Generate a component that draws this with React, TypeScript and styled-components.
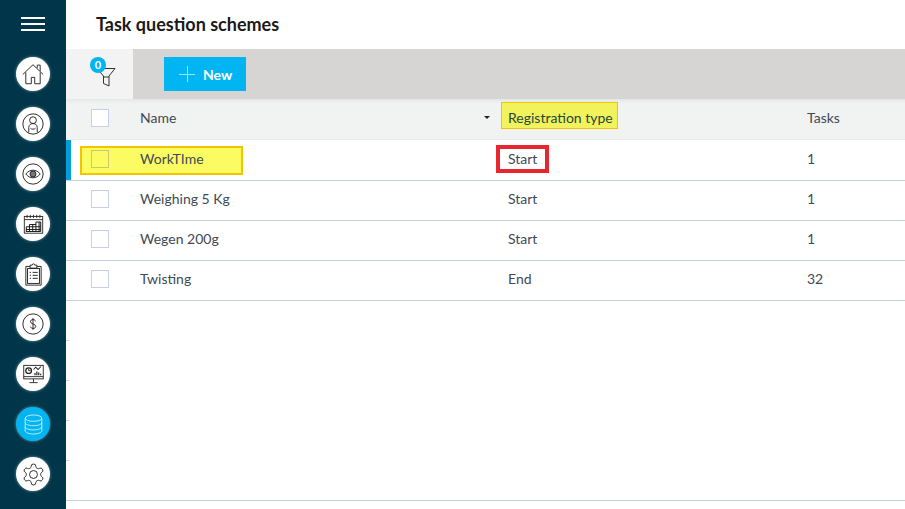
import React from "react";
import styled, {createGlobalStyle} from "styled-components";

const GlobalStyle = createGlobalStyle`
  html, body {
    margin: 0;
    padding: 0;
    height: 100%;
    background: #fff;
    font-family: "Lato", "Liberation Sans", sans-serif;
    overflow: hidden;
  }
`;

const House = () => (
  <svg width="22" height="22" viewBox="0 0 26 26" fill="none" stroke="#222" strokeWidth="1.100">
    <path d="M1 13.500 13 2l12 11.500M4.500 11v13.500h6.500V17h4v7.500h6.500V11M18 6V2.500h3.500V9.500" />
  </svg>
);

const Person = () => (
  <svg width="22" height="22" viewBox="0 0 26 26" fill="none" stroke="#222" strokeWidth="1.100">
    <circle cx="13" cy="13" r="12" />
    <circle cx="13" cy="8.500" r="4" />
    <path d="M8 23v-6c0-3 2.500-4.500 5-4.500s5 1.500 5 4.500v6M10 18c1 1.500 5 1.500 6 0" />
  </svg>
);

const Eye = () => (
  <svg width="22" height="22" viewBox="0 0 26 26" fill="none" stroke="#222" strokeWidth="1.100">
    <circle cx="13" cy="13" r="12" />
    <path d="M4.500 13c4.500-6 12.500-6 17 0-4.500 6-12.500 6-17 0z" />
    <circle cx="13" cy="13" r="3.500" fill="#777" />
  </svg>
);

const Calendar = () => (
  <svg width="21" height="20" viewBox="0 0 26 25" fill="none" stroke="#222" strokeWidth="1.100">
    <rect x="1.500" y="3" width="23" height="21" />
    <path d="M1.500 7h23M5 1v4M9 1v4M13 1v4M17 1v4M21 1v4" />
    <path d="M4 16h18M4 19.500h18M8 13v9M12 13v9M16 10v12M20 10v12M8 13h8M16 10h6M22 10v12M4 16v6h18" strokeWidth="1.300" />
  </svg>
);

const Clipboard = () => (
  <svg width="17" height="23" viewBox="0 0 20 26" fill="none" stroke="#222" strokeWidth="1.100">
    <path d="M6 3.500H1v22h18v-22h-5" />
    <rect x="3" y="6" width="14" height="17.500" />
    <path d="M6 5.500V2h2.500a1.500 1.500 0 0 1 3 0H14v3.500z" />
    <path d="M5.500 10.500h1.500M9 10.500h6M5.500 14h1.500M9 14h6M5.500 17.500h1.500M9 17.500h6" />
  </svg>
);

const Dollar = () => (
  <svg width="22" height="22" viewBox="0 0 26 26" fill="none" stroke="#222" strokeWidth="1.100">
    <circle cx="13" cy="13" r="12" />
    <path d="M16 9.800c-.4-1.400-1.500-2-3-2-1.900 0-3 1-3 2.500 0 3.400 6.200 2 6.200 5.500 0 1.500-1.200 2.400-3.200 2.400-1.500 0-2.600-.7-3-2.100M13 6v14" />
  </svg>
);

const Monitor = () => (
  <svg width="21" height="20" viewBox="0 0 28 26" fill="none" stroke="#222" strokeWidth="1.200">
    <rect x="1" y="1.500" width="26" height="18" />
    <path d="M1 16.500h26M14 19.500v4.500M8.500 24.500h11" />
    <circle cx="7.500" cy="8.500" r="3.800" strokeWidth="1.700" />
    <path d="M7.500 6V8.500h2.500" />
    <path d="M14 7l3-3 3 3 4-4" strokeWidth="1.400" />
    <path d="M16 14.500v-3M18.500 14.500v-5M21 14.500v-3.500M23.500 14.500v-2" strokeWidth="1.600" />
  </svg>
);

const Database = () => (
  <svg width="19" height="21" viewBox="0 0 24 26" fill="none" stroke="#d8f4ff" strokeWidth="1.100">
    <ellipse cx="12" cy="5" rx="10.500" ry="4" />
    <path d="M1.500 5v16c0 2.200 4.700 4 10.500 4s10.500-1.800 10.500-4V5M1.500 10.500c0 2.200 4.700 4 10.500 4s10.500-1.800 10.500-4M1.500 15.800c0 2.200 4.700 4 10.500 4s10.500-1.800 10.500-4" />
  </svg>
);

const Gear = () => (
  <svg width="25" height="25" viewBox="0 0 24 24" fill="none" stroke="#222" strokeWidth="0.900">
    <path d="M12.220 2h-.44a2 2 0 0 0-2 2v.180a2 2 0 0 1-1 1.730l-.43.250a2 2 0 0 1-2 0l-.150-.080a2 2 0 0 0-2.730.730l-.220.380a2 2 0 0 0 .730 2.730l.150.100a2 2 0 0 1 1 1.720v.510a2 2 0 0 1-1 1.740l-.150.090a2 2 0 0 0-.730 2.730l.220.380a2 2 0 0 0 2.730.730l.150-.080a2 2 0 0 1 2 0l.430.250a2 2 0 0 1 1 1.730V20a2 2 0 0 0 2 2h.440a2 2 0 0 0 2-2v-.180a2 2 0 0 1 1-1.730l.430-.250a2 2 0 0 1 2 0l.150.080a2 2 0 0 0 2.730-.730l.220-.390a2 2 0 0 0-.730-2.730l-.150-.080a2 2 0 0 1-1-1.740v-.500a2 2 0 0 1 1-1.740l.150-.090a2 2 0 0 0 .730-2.730l-.220-.380a2 2 0 0 0-2.730-.730l-.150.080a2 2 0 0 1-2 0l-.430-.250a2 2 0 0 1-1-1.730V4a2 2 0 0 0-2-2z" />
    <circle cx="12" cy="12" r="3.800" />
  </svg>
);

const Funnel = () => (
  <svg width="20" height="20" viewBox="0 0 20 20" fill="none" stroke="#333" strokeWidth="1">
    <path d="M1 1.500h18L13 9v10l-5.500-2.500V9z" />
    <path d="M7.500 10h5.500" />
  </svg>
);

const NAV_ITEMS = [
  {id: "home", icon: <House />},
  {id: "people", icon: <Person />},
  {id: "eye", icon: <Eye />},
  {id: "calendar", icon: <Calendar />},
  {id: "clipboard", icon: <Clipboard />},
  {id: "money", icon: <Dollar />},
  {id: "report", icon: <Monitor />},
  {id: "data", icon: <Database />, active: true},
  {id: "settings", icon: <Gear />},
];

const ROWS = [
  {name: "WorkTIme", type: "Start", tasks: "1", current: true},
  {name: "Weighing 5 Kg", type: "Start", tasks: "1"},
  {name: "Wegen 200g", type: "Start", tasks: "1"},
  {name: "Twisting", type: "End", tasks: "32"},
];

export default function App() {
  return (
    <Page>
      <GlobalStyle />
      <Sidebar>
        <Burger>
          <span />
          <span />
          <span />
        </Burger>
        <NavList>
          {NAV_ITEMS.map((item) => (
            <NavCircle key={item.id} $active={item.active}>
              {item.icon}
            </NavCircle>
          ))}
        </NavList>
      </Sidebar>
      <Main>
        <Title>Task question schemes</Title>
        <Toolbar>
          <FilterBox>
            <FilterIcon>
              <Funnel />
              <Badge>0</Badge>
            </FilterIcon>
          </FilterBox>
          <NewButton>
            <PlusIcon />
            New
          </NewButton>
        </Toolbar>
        <HeaderRow>
          <CheckCell>
            <Checkbox />
          </CheckCell>
          <NameCell>
            Name
            <SortArrow />
          </NameCell>
          <div>
            <YellowMark>Registration type</YellowMark>
          </div>
          <div>Tasks</div>
        </HeaderRow>
        {ROWS.map((row) => (
          <Row key={row.name} $current={row.current}>
            <CheckCell>
              <Checkbox $dim={row.current} />
            </CheckCell>
            <NameCell>{row.name}</NameCell>
            <div>{row.current ? <RedMark>{row.type}</RedMark> : row.type}</div>
            <div>{row.tasks}</div>
            {row.current && <NameHighlight />}
          </Row>
        ))}
        {[0, 1, 2, 3].map((n) => (
          <EmptyRow key={n} />
        ))}
        <LastRow />
      </Main>
    </Page>
  );
}

const Page = styled.div`
  display: flex;
  width: 905px;
  height: 509px;
  overflow: hidden;
  background: #fff;
`;

const Sidebar = styled.nav`
  width: 66px;
  flex: none;
  background: #01364a;
  display: flex;
  flex-direction: column;
  align-items: center;
`;

const Burger = styled.div`
  height: 49px;
  box-sizing: border-box;
  padding-bottom: 1px;
  display: flex;
  flex-direction: column;
  justify-content: center;
  gap: 4px;
  span {
    display: block;
    width: 24px;
    height: 2px;
    background: #fff;
  }
`;

const NavList = styled.div`
  display: flex;
  flex-direction: column;
  align-items: center;
  gap: 16px;
  padding-top: 8px;
`;

const NavCircle = styled.div<{$active?: boolean}>`
  width: 34px;
  height: 34px;
  border-radius: 50%;
  background: ${(props) => (props.$active ? "#00b5f1" : "#fff")};
  box-shadow: 0 0 3px rgba(255, 255, 255, 0.5);
  display: flex;
  align-items: center;
  justify-content: center;
  svg {
    display: block;
  }
`;

const Main = styled.main`
  flex: 1;
  min-width: 0;
  display: flex;
  flex-direction: column;
`;

const Title = styled.h1`
  margin: 0;
  height: 49px;
  flex: none;
  padding: 13px 0 0 30px;
  box-sizing: border-box;
  font-size: 18px;
  line-height: 22px;
  font-weight: 700;
  color: #1a1a1a;
`;

const Toolbar = styled.div`
  height: 50px;
  flex: none;
  background: #d6d5d3;
  display: flex;
  align-items: center;
`;

const FilterBox = styled.div`
  width: 67px;
  height: 100%;
  background: #f3f3f3;
  display: flex;
  align-items: center;
  justify-content: center;
`;

const FilterIcon = styled.div`
  position: relative;
  width: 20px;
  height: 20px;
  margin: 6px 0 0 13px;
  svg {
    display: block;
  }
`;

const Badge = styled.span`
  position: absolute;
  left: -6px;
  top: -10px;
  width: 16px;
  height: 16px;
  border-radius: 50%;
  background: #00b5f1;
  color: #fff;
  font-size: 11px;
  font-weight: 700;
  line-height: 16px;
  text-align: center;
`;

const NewButton = styled.button`
  margin-left: 31px;
  width: 82px;
  height: 34px;
  border: 0;
  padding: 0 0 0 15px;
  background: #00b5f1;
  color: #fff;
  font-family: inherit;
  font-size: 14px;
  font-weight: 700;
  display: flex;
  align-items: center;
  gap: 8px;
`;

const PlusIcon = styled.span`
  width: 16px;
  height: 16px;
  background:
    linear-gradient(#9fe3fa, #9fe3fa) center / 16px 1px no-repeat,
    linear-gradient(#9fe3fa, #9fe3fa) center / 1px 16px no-repeat;
`;

const RowBase = styled.div`
  position: relative;
  flex: none;
  display: grid;
  grid-template-columns: 74px 368px 299px 1fr;
  align-items: center;
  box-sizing: border-box;
  font-size: 14px;
  color: #3f4a55;
`;

const HeaderRow = styled(RowBase)`
  height: 41px;
  padding-bottom: 3px;
  background: #f1f2f2;
  box-shadow: inset 0 6px 5px -5px rgba(0, 0, 0, 0.08);
  border-bottom: 1px solid #eceded;
`;

const Row = styled(RowBase)<{$current?: boolean}>`
  height: ${(props) => (props.$current ? "41px" : "40px")};
  padding-bottom: ${(props) => (props.$current ? "3px" : "4px")};
  border-bottom: 1px solid #c9cfe6;
  &:before {
    content: "";
    display: ${(props) => (props.$current ? "block" : "none")};
    position: absolute;
    left: 0;
    top: 0;
    bottom: 0;
    width: 5px;
    background: #009fdc;
  }
`;

const EmptyRow = styled.div`
  flex: none;
  height: 40px;
  box-sizing: border-box;
  border-bottom: 1px solid;
  border-image: linear-gradient(to right, #c9cfe6 4px, transparent 4px) 1;
`;

const LastRow = styled.div`
  flex: none;
  height: 40px;
  box-sizing: border-box;
  border-bottom: 1px solid #c9cfe6;
`;

const CheckCell = styled.div`
  padding-left: 25px;
  display: flex;
  position: relative;
  z-index: 1;
`;

const Checkbox = styled.span<{$dim?: boolean}>`
  width: 16px;
  height: 16px;
  border: 1px solid ${(props) => (props.$dim ? "#c9c96a" : "#c9cfe6")};
  background: ${(props) => (props.$dim ? "transparent" : "#fff")};
`;

const NameCell = styled.div`
  position: relative;
  z-index: 1;
  display: flex;
  align-items: center;
  justify-content: space-between;
`;

const SortArrow = styled.span`
  margin-right: 18px;
  width: 0;
  height: 0;
  border-left: 3px solid transparent;
  border-right: 3px solid transparent;
  border-top: 3px solid #222;
`;

const YellowMark = styled.span`
  display: block;
  width: fit-content;
  margin: 0 0 4px -7px;
  padding: 5px 4px 0 6px;
  line-height: 20px;
  background: #f2f25c;
  border: 1px solid #f0c400;
  color: #1f4a3a;
`;

const RedMark = styled.span`
  display: inline-block;
  margin-left: -12px;
  padding: 0 8px 0 8px;
  height: 20px;
  line-height: 20px;
  border: 4px solid #e8262f;
`;

const NameHighlight = styled.div`
  position: absolute;
  left: 14px;
  top: 6px;
  width: 163px;
  height: 29px;
  box-sizing: border-box;
  background: #fbfb62;
  border: 2px solid #f5c400;
`;
